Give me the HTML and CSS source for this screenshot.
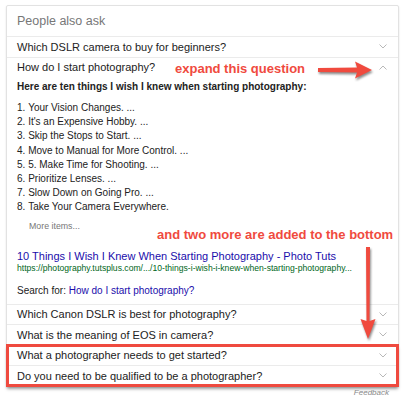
FILE: index.html
```html
<!DOCTYPE html>
<html lang="en">
<head>
  <meta charset="UTF-8">
  <title>People also ask</title>
  <link rel="stylesheet" href="styles.css">
</head>
<body>
  <div class="paa">
    <div class="paa-title">People also ask</div>

    <div class="q">
      <div class="q-head">
        <span>Which DSLR camera to buy for beginners?</span>
        <svg class="chev" viewBox="0 0 8 5"><path d="M0.5 0.5 L4 4 L7.5 0.5"/></svg>
      </div>
    </div>

    <div class="q">
      <div class="q-head">
        <span>How do I start photography?</span>
        <svg class="chev" viewBox="0 0 8 5"><path d="M0.5 4.5 L4 1 L7.5 4.5"/></svg>
      </div>
      <div class="answer">
        <div class="answer-lead">Here are ten things I wish I knew when starting photography:</div>
        <ol class="answer-list">
          <li>Your Vision Changes. ...</li>
          <li>It's an Expensive Hobby. ...</li>
          <li>Skip the Stops to Start. ...</li>
          <li>Move to Manual for More Control. ...</li>
          <li>5. Make Time for Shooting. ...</li>
          <li>Prioritize Lenses. ...</li>
          <li>Slow Down on Going Pro. ...</li>
          <li>Take Your Camera Everywhere.</li>
        </ol>
        <div class="more">More items...</div>
        <a class="src-title" href="#">10 Things I Wish I Knew When Starting Photography - Photo Tuts</a>
        <div class="src-url">https://photography.tutsplus.com/.../10-things-i-wish-i-knew-when-starting-photography...</div>
        <div class="search-for">Search for: <a href="#">How do I start photography?</a></div>
      </div>
    </div>

    <div class="q">
      <div class="q-head">
        <span>Which Canon DSLR is best for photography?</span>
        <svg class="chev" viewBox="0 0 8 5"><path d="M0.5 0.5 L4 4 L7.5 0.5"/></svg>
      </div>
    </div>

    <div class="q">
      <div class="q-head">
        <span>What is the meaning of EOS in camera?</span>
        <svg class="chev" viewBox="0 0 8 5"><path d="M0.5 0.5 L4 4 L7.5 0.5"/></svg>
      </div>
    </div>

    <!-- the two new questions, boxed in red -->
    <div class="added">
      <div class="q">
        <div class="q-head">
          <span>What a photographer needs to get started?</span>
          <svg class="chev" viewBox="0 0 8 5"><path d="M0.5 0.5 L4 4 L7.5 0.5"/></svg>
        </div>
      </div>
      <div class="q">
        <div class="q-head">
          <span>Do you need to be qualified to be a photographer?</span>
          <svg class="chev" viewBox="0 0 8 5"><path d="M0.5 0.5 L4 4 L7.5 0.5"/></svg>
        </div>
      </div>
    </div>
  </div>

  <div class="feedback">Feedback</div>

  <!-- annotations -->
  <div class="note note-expand">expand this question</div>
  <svg class="arrow arrow-right" viewBox="0 0 58 22">
    <path d="M2 9 L41 8.5 L39 2.5 L56 11 L39 19.5 L41 13.5 L2 13 Z"/>
  </svg>

  <div class="note note-added">and two more are added to the bottom</div>
  <svg class="arrow arrow-down" viewBox="0 0 18 96">
    <path d="M7 2 L11 2 L10.5 76 L16.5 74 L9 94 L1.5 74 L7.5 76 Z"/>
  </svg>
</body>
</html>
```

FILE: styles.css
```css
body {
  margin: 0;
  background: #fff;
  font-family: "Liberation Sans", Arial, sans-serif;
  color: #222;
  position: relative;
}

.paa {
  margin: 5px 8px 0 6px;
  border: 1px solid #e2e2e2;
  border-radius: 2px;
  box-shadow: 0 1px 2px rgba(0,0,0,0.12);
  background: #fff;
}

.paa-title {
  height: 30px;
  padding-left: 10px;
  display: flex;
  align-items: center;
  font-size: 12.5px;
  color: #777;
}

.q {
  border-top: 1px solid #ebebeb;
}

.q-head {
  height: 19.5px;
  padding: 0 10px;
  display: flex;
  align-items: center;
  justify-content: space-between;
  font-size: 11px;
  color: #222;
}

.chev {
  width: 8px;
  height: 5px;
  margin-right: 1px;
  fill: none;
  stroke: #b0b0b0;
  stroke-width: 0.9;
}

.answer {
  padding: 0 10px 7px;
}

.answer-lead {
  margin-top: 4px;
  font-size: 10px;
  line-height: 12px;
  font-weight: bold;
}

.answer-list {
  margin: 8px 0 0;
  padding: 0;
  list-style-position: inside;
  font-size: 10px;
  line-height: 14.2px;
}

.more {
  margin-top: 5px;
  padding-left: 12px;
  font-size: 8.8px;
  line-height: 12px;
  color: #777;
}

.src-title {
  display: block;
  margin-top: 18px;
  font-size: 11px;
  line-height: 13px;
  color: #1a0dab;
  text-decoration: none;
}

.src-url {
  font-size: 8.6px;
  line-height: 11px;
  color: #006621;
  white-space: nowrap;
}

.search-for {
  margin-top: 11px;
  font-size: 10px;
  line-height: 12px;
}

.search-for a {
  color: #1a0dab;
  text-decoration: none;
}

.added {
  outline: 3px solid #ef4a3f;
  outline-offset: -2px;
  box-shadow: 0 3px 3px rgba(0,0,0,0.35);
}

.feedback {
  margin: 1px 18px 0 0;
  text-align: right;
  font-size: 8px;
  line-height: 9px;
  font-style: italic;
  color: #888;
}

.note {
  position: absolute;
  font-size: 13px;
  font-weight: bold;
  color: #f04a3e;
  white-space: nowrap;
}

.note-expand {
  left: 175px;
  top: 61px;
}

.note-added {
  left: 157px;
  top: 227px;
}

.arrow {
  position: absolute;
  fill: #f04a3e;
  filter: drop-shadow(1px 2px 1px rgba(0,0,0,0.45));
}

.arrow-right {
  left: 316px;
  top: 59px;
  width: 58px;
  height: 22px;
}

.arrow-down {
  left: 359px;
  top: 245px;
  width: 18px;
  height: 96px;
}
```
